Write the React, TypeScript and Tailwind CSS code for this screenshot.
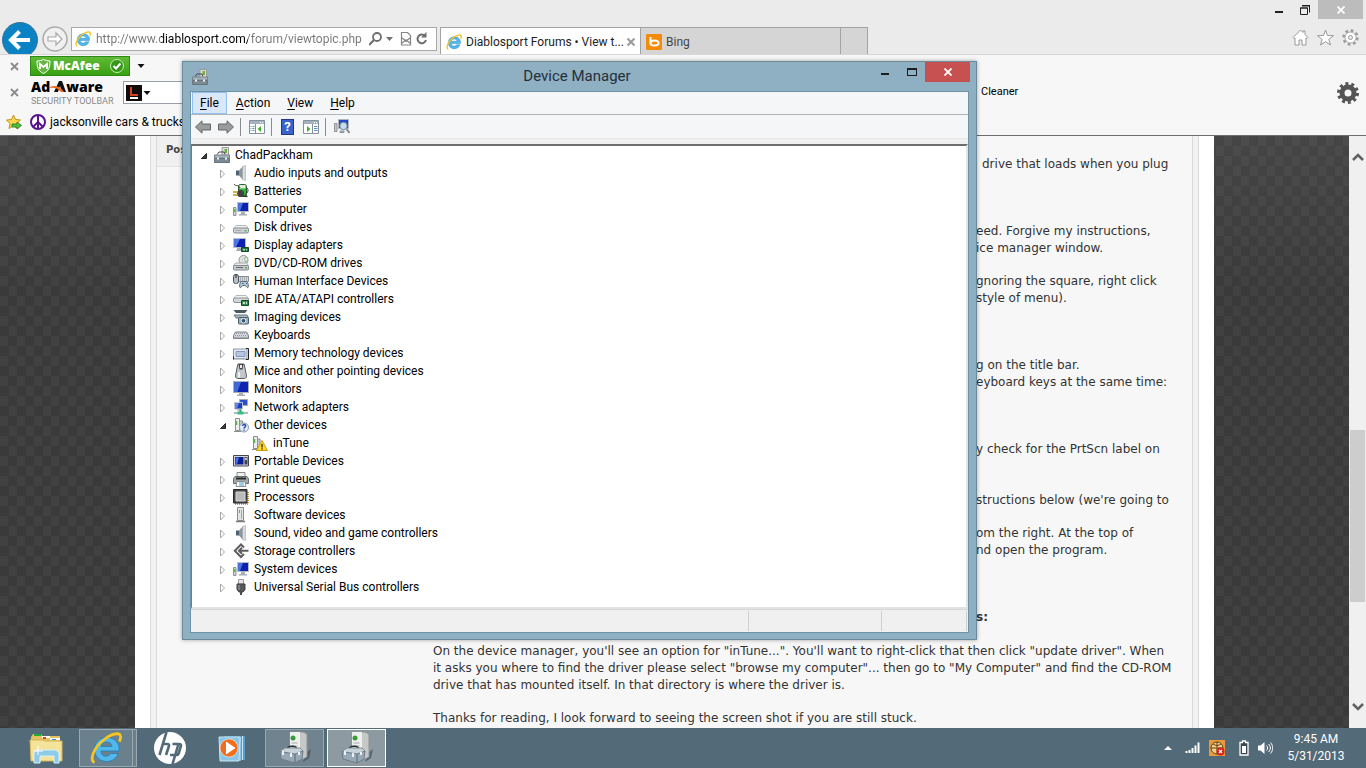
import { useState } from "react";
import type { ReactNode } from "react";

type IconProps = { name: string };

// 16px device icons
const icons: Record<string, ReactNode> = {
  root: (
    <>
      <path d="M8 0.5h6.5v9H8z" fill="#dcdcdc" stroke="#9a9a9a" />
      <path d="M10.5 2h2.5v4h-2.5z" fill="#6fae3c" />
      <path d="M3 7.5 5 5h5l1 2.5" fill="none" stroke="#444" />
      <path d="M0.5 8h15v3h-15z" fill="#a9b5bd" stroke="#76838c" />
      <path d="M0.5 11.5h15v4h-15z" fill="#7d8b95" stroke="#66737c" />
      <path d="M3 10.5h2v2H3zM11 10.5h2v2h-2z" fill="#eef3f6" />
    </>
  ),
  audio: (
    <>
      <path d="M3 5.5h3v5H3z" fill="#4c6273" />
      <path d="M6 5.500 10 1v14l-4-4.500z" fill="#8d979d" />
      <path d="M9.500 1.500 12.500 0.500v15l-3-1z" fill="#d9dcde" stroke="#9aa2a7" strokeWidth="0.500" />
    </>
  ),
  battery: (
    <>
      <rect x="5.500" y="1.500" width="8" height="12" rx="2" fill="#2fae34" stroke="#2c5c2c" />
      <path d="M6.500 2h6v3.500h-6z" fill="#d9efd9" />
      <path d="M1 1c2 3 4 0 6 4M13 4.500c3.500 1 2 6-1 7" fill="none" stroke="#444" />
      <circle cx="7.500" cy="10.500" r="3.500" fill="#3f4240" />
      <path d="M0 9h5M0 12h5" stroke="#c8960c" strokeWidth="1.500" />
      <path d="m10 13 4.500 0.500" stroke="#333" strokeWidth="1.500" />
    </>
  ),
  computer: (
    <>
      <path d="M4.500 1.500h11v9h-11z" fill="#0d22b0" stroke="#b8bec6" />
      <path d="M5 2h5l-3 8H5z" fill="#4a73e0" />
      <path d="M8 11h4v2h2v1.500H6V13h2z" fill="#a7adb3" />
      <path d="M0.500 6.500h2.500v8H0.500z" fill="#d5d9dc" stroke="#8b9298" />
      <path d="M1 8h1.500v3H1z" fill="#57b947" />
    </>
  ),
  disk: (
    <>
      <path d="M3 6.500h10l2.500 3h-15z" fill="#f1f2f3" stroke="#b4b8bc" />
      <rect x="0.500" y="9" width="15" height="5" rx="1.500" fill="#cfd2d5" stroke="#84898e" />
      <path d="M2.500 11.500h6" stroke="#aaa" />
      <path d="M11.500 11h2v1.500h-2z" fill="#4cb944" />
    </>
  ),
  display: (
    <>
      <path d="M0.500 1.500h12v9h-12z" fill="#0d22b0" stroke="#b8bec6" />
      <path d="M1 2h6L3 10H1z" fill="#4d76e4" />
      <path d="M4 11h5v2h1v1H3v-1h1z" fill="#a7adb3" />
      <path d="M8.500 10.500h7v4h-7z" fill="#257544" stroke="#124a28" />
      <path d="M10 12h2v1.500h-2zM13 12h1v1.500h-1z" fill="#b5d8be" />
    </>
  ),
  dvd: (
    <>
      <circle cx="10.500" cy="5" r="4.500" fill="#dfe6df" stroke="#8e958e" />
      <path d="M10.500 5 13 1.500M10.500 5 14 7" stroke="#78b886" />
      <circle cx="10.500" cy="5" r="1.200" fill="#fff" stroke="#999" strokeWidth="0.500" />
      <path d="M2.500 8h11l2 2.500h-15z" fill="#e9ebed" stroke="#a4a9ae" />
      <rect x="0.500" y="10.500" width="15" height="4.500" rx="1" fill="#c6cace" stroke="#84898e" />
      <path d="M3 12.500h7" stroke="#666" />
      <path d="M12 12h2v1.500h-2z" fill="#4cb944" />
    </>
  ),
  hid: (
    <>
      <path d="M5.500 3.500h10v5h-10z" fill="#d7dce0" stroke="#868d93" />
      <path d="M7 5h8M7 7h8" stroke="#737d86" strokeDasharray="1 1" />
      <rect x="0.500" y="1.500" width="5" height="9" rx="2" fill="#b9bfc4" stroke="#4b5258" />
      <path d="M3 1v4" stroke="#222" />
      <path d="M7 14.500c-1-1 0-6 1.500-6h4.500c2 0 3 5 2 6-1 .7-2-2-3-2h-2c-1 0-2 2.700-3 2z" fill="#b6c4cf" stroke="#596874" />
      <path d="M9 10.500h1.500M13 10.500h1" stroke="#2b6fb0" />
    </>
  ),
  ide: (
    <>
      <path d="M3 4.500h10l2.500 3h-15z" fill="#f1f2f3" stroke="#b4b8bc" />
      <rect x="0.500" y="7" width="15" height="4.500" rx="1.500" fill="#d4d7da" stroke="#8d9196" />
      <path d="M8.500 9.500h7v5h-7z" fill="#2f8a4b" stroke="#124a28" />
      <path d="M10 11h2v2h-2zM13 11h1v2h-1z" fill="#c6e2cc" />
    </>
  ),
  imaging: (
    <>
      <path d="M0.500 1h14l-2.500 3h-9z" fill="#4a5a62" />
      <path d="M1 6h13l1.500 3H3z" fill="#a7bac2" stroke="#66767e" />
      <rect x="5.500" y="8.500" width="10" height="6.500" rx="1" fill="#9ab0ba" stroke="#4b5d66" />
      <circle cx="10.500" cy="11.700" r="2.300" fill="#2d5377" stroke="#e6edf0" />
    </>
  ),
  keyboard: (
    <>
      <path d="M2.500 5h11l2 3.500v3h-15v-3z" fill="#d6d9dd" stroke="#777d85" />
      <path d="M3 6.500h10.500M2 8.500h12.500" stroke="#8e949b" strokeDasharray="1 1" />
      <path d="M1 10.500h14" stroke="#a9aeb4" strokeWidth="1.500" />
    </>
  ),
  memory: (
    <>
      <path d="M0.500 4h13.500v10H0.500z" fill="#e3ecf6" stroke="#8a94a0" />
      <path d="M3 6.500h9v5H3z" fill="#b6c5e0" stroke="#8497bb" />
      <path d="M13 3.500h2.500v11H13M0.500 14.500v-3" fill="none" stroke="#222" />
      <path d="M1.500 13.500h11" stroke="#8a929c" strokeDasharray="1 1" />
    </>
  ),
  mouse: (
    <>
      <path d="M5 1h6l1 4 1.500 8c0 2-1.500 2.500-2.500 2.500H5C4 15.500 2.500 15 2.500 13L4 5z" fill="#c4c8cb" stroke="#555b60" />
      <path d="M5.500 1h5l-1 5.500h-3z" fill="#41474c" />
      <path d="M7 2h2v3H7z" fill="#eee" />
      <path d="M6 9v5.500" stroke="#fff" strokeWidth="1.500" />
    </>
  ),
  monitor: (
    <>
      <path d="M0.500 0.500h15v11h-15z" fill="#0d22b0" stroke="#a9afb6" />
      <path d="M1 1h7L4.500 11H1z" fill="#4068da" />
      <path d="M6 12h4v1.500h2V15H4v-1.500h2z" fill="#a7adb3" />
    </>
  ),
  network: (
    <>
      <path d="M6.500 0.500h8v6h-8z" fill="#2c50cc" stroke="#a4abb2" />
      <path d="M1.500 3.500h8v6.500h-8z" fill="#1c3ec2" stroke="#c0c6cc" />
      <path d="M2 4h4l-2 5.500H2z" fill="#5c86ea" />
      <path d="M4 10.500h4v1H4z" fill="#999" />
      <path d="M1 14h14" stroke="#b4babd" strokeWidth="2" />
      <path d="M7.500 10.500v4" stroke="#29a86e" strokeWidth="2" />
      <path d="M4.500 12.500h6v3h-6z" fill="#32c183" />
    </>
  ),
  other: (
    <>
      <path d="M2.500 1.500h4v12h-4z" fill="#eceeed" stroke="#8b908e" />
      <path d="M3.500 4v4" stroke="#5bb54c" strokeWidth="1.500" />
      <path d="M6.500 4h3v9h-3zM1 14.500h7" fill="#c9cdcb" stroke="#8b908e" />
      <circle cx="11" cy="10.500" r="4.500" fill="#e4edf8" stroke="#8298b4" />
      <path d="M9.500 9c0-2 3.200-2 3.200 0 0 1.300-1.700 1-1.700 2.500M11 12.500v1.200" fill="none" stroke="#2444a4" strokeWidth="1.300" />
    </>
  ),
  warning: (
    <>
      <path d="M1.500 1.500h4v12h-4z" fill="#eceeed" stroke="#8b908e" />
      <path d="M2.500 4v4" stroke="#5bb54c" strokeWidth="1.500" />
      <path d="M5.500 4h2.500v9H5.500zM0 14.500h6" fill="#c9cdcb" stroke="#8b908e" />
      <path d="m10 5.500 5.500 10h-11z" fill="#ffd929" stroke="#c89b11" strokeLinejoin="round" />
      <path d="M10 9v3.500M10 13.300v1.200" stroke="#222" strokeWidth="1.300" />
    </>
  ),
  portable: (
    <>
      <path d="M0.500 2.500h15v10.500h-15z" fill="#d2d4d8" stroke="#45484f" />
      <path d="M2 4h8.500v7.500H2z" fill="#0b1d96" />
      <path d="M2.500 4.500H6L4 11H2.500z" fill="#4a75e6" />
      <path d="M11.500 4h3v7.500h-3z" fill="#3d4048" />
      <circle cx="13" cy="6" r="1.200" fill="#c3c6cc" />
    </>
  ),
  printer: (
    <>
      <path d="M4 1.500h8v5H4z" fill="#f0f0f0" stroke="#888" />
      <path d="M2 5.500h12l1.500 2v5H0.500v-5z" fill="#a0a5a9" stroke="#6a6f73" />
      <path d="M3 7.500h10" stroke="#292c2e" strokeWidth="2" />
      <path d="M4 10.500h8l1 5H3z" fill="#fff" stroke="#8b9094" />
      <path d="M6 12h5M6 14h5" stroke="#3c9fc8" />
    </>
  ),
  processor: (
    <>
      <path d="M2 15h13M15 3v12" stroke="#cc9b46" strokeWidth="2" strokeDasharray="1 1" />
      <path d="M0.500 0.500h13.500v13.500H0.500z" fill="#474747" stroke="#2a2a2a" />
      <path d="M3 3h9v9H3z" fill="#b9bcbc" stroke="#d8d8d8" />
      <path d="m12 10 1.500 1.500-1.500 1.500z" fill="#e0a83b" />
    </>
  ),
  software: (
    <>
      <path d="M4.500 0.500h6v13h-6z" fill="#e1e4e2" stroke="#8b908e" />
      <path d="M8.500 3v9" stroke="#a5aaa7" />
      <path d="M6.500 3v3" stroke="#5bb54c" />
      <path d="M3 14.500h9" stroke="#777b79" strokeWidth="1.500" />
    </>
  ),
  storage: (
    <path
      d="M11 4.500 8 1.500 1.800 7.700 8 14l3-3M15.500 7.700H6M9 4.700l-3 3 3 3"
      fill="none"
      stroke="#5d5d5d"
      strokeWidth="2"
    />
  ),
  usb: (
    <>
      <path d="M5.500 0.500h5V5h-5z" fill="#e4e5e6" stroke="#9a9da0" />
      <path d="M4 5h8v5.500L10 13H6l-2-2.500z" fill="#56595c" stroke="#3e4144" />
      <path d="M6 6v5" stroke="#a0a4a8" />
      <path d="M8 13v3" stroke="#4a4d50" strokeWidth="2" />
    </>
  ),
};

function DeviceIcon({ name }: IconProps) {
  return (
    <svg viewBox="0 0 16 16" className="size-4 shrink-0" aria-hidden="true">
      {icons[name]}
    </svg>
  );
}

function IeLogo({ className }: { className: string }) {
  return (
    <svg viewBox="0 0 32 32" className={className} aria-hidden="true">
      <path
        d="M28 21.500h-7.500c-1 2-2.700 2.700-4.500 2.700-3 0-5-1.700-5-5.200H29C30 11 24.500 5.500 17 5.500S4.500 11 4.500 17.500 9.500 29.500 16.500 29.500c5.500 0 10-3 11.500-8zM11 14.500c.5-3 2.500-4.500 5.500-4.500s5 1.500 5.500 4.500z"
        fill="#52b7ea"
        stroke="#1d7fc0"
        strokeWidth="0.800"
        fillRule="evenodd"
      />
      <path
        d="M4.500 30.500C-1 28 4 16 12.500 9 20.500 2 29.500-0.500 30.500 4c.4 1.500-.2 3.500-1.200 5.500"
        fill="none"
        stroke="#f6c51f"
        strokeWidth="2.800"
      />
    </svg>
  );
}

function DeviceManagerLogo() {
  return (
    <svg viewBox="0 0 32 34" className="h-[34px] w-8" aria-hidden="true">
      <path d="m27 22 5-4-2 9-6 4z" fill="#36454e" opacity="0.600" />
      <path d="M11 1h13l4 2v23l-4 2H11z" fill="#c6c8c8" stroke="#8d9394" />
      <path d="M11 1h10v26H11z" fill="#eef0ef" />
      <circle cx="14" cy="7" r="2.500" fill="#3a9a37" />
      <path d="M12.500 12h6M12.500 15h6" stroke="#a5a9a9" />
      <path d="M8 19c0-5 10-5 10 0" fill="none" stroke="#252a2d" strokeWidth="1.500" />
      <path d="m1 20 5-3h15l3 3-5 4H5z" fill="#c7d2d9" stroke="#7d8c96" />
      <path d="M1 20.500 16 23v9L2 28zM16 23l8-3-1 8-7 4z" fill="#98a9b5" stroke="#6c7c88" />
      <path d="M4 20v4M12 22v4M20 21v3" stroke="#eaf0f3" strokeWidth="2" />
    </svg>
  );
}

type Device = { label: string; icon: string; children?: Device[] };

const devices: Device[] = [
  { label: "Audio inputs and outputs", icon: "audio" },
  { label: "Batteries", icon: "battery" },
  { label: "Computer", icon: "computer" },
  { label: "Disk drives", icon: "disk" },
  { label: "Display adapters", icon: "display" },
  { label: "DVD/CD-ROM drives", icon: "dvd" },
  { label: "Human Interface Devices", icon: "hid" },
  { label: "IDE ATA/ATAPI controllers", icon: "ide" },
  { label: "Imaging devices", icon: "imaging" },
  { label: "Keyboards", icon: "keyboard" },
  { label: "Memory technology devices", icon: "memory" },
  { label: "Mice and other pointing devices", icon: "mouse" },
  { label: "Monitors", icon: "monitor" },
  { label: "Network adapters", icon: "network" },
  { label: "Other devices", icon: "other", children: [{ label: "inTune", icon: "warning" }] },
  { label: "Portable Devices", icon: "portable" },
  { label: "Print queues", icon: "printer" },
  { label: "Processors", icon: "processor" },
  { label: "Software devices", icon: "software" },
  { label: "Sound, video and game controllers", icon: "audio" },
  { label: "Storage controllers", icon: "storage" },
  { label: "System devices", icon: "computer" },
  { label: "Universal Serial Bus controllers", icon: "usb" },
];

function Expander({ open, label, onClick }: { open: boolean; label: string; onClick?: () => void }) {
  return (
    <button type="button" aria-label={label} aria-expanded={open} onClick={onClick} className="mr-1 h-4 w-3 shrink-0">
      <svg viewBox="0 0 12 16" className="h-4 w-3" aria-hidden="true">
        {open ? <path d="M8.500 6.500v5h-5z" fill="#404040" stroke="#262626" /> : <path d="M3.500 5v8l4-4z" fill="#fff" stroke="#a6a6a6" />}
      </svg>
    </button>
  );
}

function TreeItem({ device }: { device: Device }) {
  const [open, setOpen] = useState(true);
  return (
    <li>
      <div className="flex h-[18px] items-center">
        {device.children || device.icon !== "warning" ? (
          <Expander open={!!device.children && open} label={"Toggle " + device.label} onClick={() => setOpen(!open)} />
        ) : (
          <span className="w-4" />
        )}
        <DeviceIcon name={device.icon} />
        <span className="ml-[5px] whitespace-nowrap">{device.label}</span>
      </div>
      {device.children && open && (
        <ul className="pl-[19px]">
          {device.children.map((child) => (
            <TreeItem key={child.label} device={child} />
          ))}
        </ul>
      )}
    </li>
  );
}

function PanelIcon({ flip }: { flip?: boolean }) {
  return (
    <svg viewBox="0 0 16 14" className="h-[14px] w-4" aria-hidden="true">
      <path d="M0.500 0.500h15v13h-15z" fill="#fff" stroke="#84909b" />
      <path d="M1 1h14v3H1z" fill="#a3b2be" />
      <path d="M11 2.500h1M13 2.500h1" stroke="#fff" />
      {flip ? (
        <>
          <path d="M9.500 4v9" stroke="#84909b" />
          <path d="M11 6.500h3.500M11 8.500h3.500M11 10.500h3.500" stroke="#5b8fc0" />
          <path d="M4 6v6l3.500-3z" fill="#3fae2a" />
        </>
      ) : (
        <>
          <path d="M6.500 4v9" stroke="#84909b" />
          <path d="M1.500 6.500h4M1.500 8.500h4M1.500 10.500h4" stroke="#5b8fc0" strokeDasharray="1 1 2 1" />
          <path d="M12 6v6L8.500 9z" fill="#3fae2a" />
        </>
      )}
    </svg>
  );
}

function ArrowIcon({ flip }: { flip?: boolean }) {
  return (
    <svg viewBox="0 0 16 14" className="h-[14px] w-4" aria-hidden="true">
      <path
        d={flip ? "M15.500 7 9 0.800V4H0.500v6H9v3.200z" : "M0.500 7 7 0.800V4h8.500v6H7v3.200z"}
        fill="#9b9b9b"
        stroke="#666"
      />
    </svg>
  );
}

function DeviceManager() {
  return (
    <section
      aria-label="Device Manager"
      className="absolute top-[61px] left-[182px] w-[795px] border border-[#6b8b9b] bg-[#8fafc3] px-[7px] pb-[6px] text-[12px] text-black shadow-[0_0_4px_rgba(0,0,0,0.35)]"
    >
      <header className="flex h-[29px] items-start">
        <div className="flex h-[29px] w-[93px] items-center pl-[2px]">
          <DeviceIcon name="root" />
        </div>
        <h1 className="flex-1 text-center text-[15px] leading-[29px] text-[#24303a]">Device Manager</h1>
        <div className="-mr-px flex">
          <button type="button" aria-label="Minimize" className="flex h-[20px] w-[27px] items-center justify-center">
            <span className="mt-[4px] h-[2px] w-2 bg-[#1e1e1e]" />
          </button>
          <button type="button" aria-label="Maximize" className="flex h-[20px] w-[27px] items-center justify-center">
            <span className="h-2 w-[10px] border border-t-2 border-[#1e1e1e]" />
          </button>
          <button type="button" aria-label="Close" className="flex h-[20px] w-[45px] items-center justify-center bg-[#c75050]">
            <svg viewBox="0 0 8 8" className="size-2" aria-hidden="true">
              <path d="m0.500 0.500 7 7M7.500 0.500l-7 7" stroke="#fff" strokeWidth="1.800" />
            </svg>
          </button>
        </div>
      </header>

      <div className="border border-[#6f93a6] bg-[#f0f0f0]">
        <nav className="flex h-[23px] items-center gap-[1px] border-b border-[#b0b3b8] bg-[#f5f6f7] pl-[1px]">
          {["File", "Action", "View", "Help"].map((item, i) => (
            <button
              key={item}
              type="button"
              className={
                i === 0
                  ? "h-[22px] border border-[#90c0ee] bg-[#d9e8f8] px-[7px] leading-5"
                  : "h-[22px] border border-transparent px-[7px] leading-5"
              }
            >
              <span className="underline underline-offset-2">{item[0]}</span>
              {item.slice(1)}
            </button>
          ))}
        </nav>

        <div className="flex h-6 items-center border-b border-[#e4e6e8] bg-[#f5f6f7] pt-px pl-1">
          <button type="button" aria-label="Back"><ArrowIcon /></button>
          <button type="button" aria-label="Forward" className="ml-[7px]"><ArrowIcon flip /></button>
          <span className="ml-[6px] h-[18px] w-px bg-[#8a8c8e]" />
          <button type="button" aria-label="Show console tree" className="ml-2"><PanelIcon /></button>
          <span className="ml-[6px] h-[18px] w-px bg-[#8a8c8e]" />
          <button type="button" aria-label="Help topics" className="ml-[9px] h-4 w-[13px] border border-[#1d3a8c] bg-[#3a62cc] text-[13px] leading-[14px] font-bold text-white">
            ?
          </button>
          <button type="button" aria-label="Show action pane" className="ml-[9px]"><PanelIcon flip /></button>
          <span className="ml-[6px] h-[18px] w-px bg-[#8a8c8e]" />
          <button type="button" aria-label="Scan for hardware changes" className="ml-2">
            <svg viewBox="0 0 16 16" className="size-4" aria-hidden="true">
              <path d="M4.500 0.500h10v9h-10z" fill="#2449c5" stroke="#b1b7be" />
              <path d="M0.500 4.500H3v8H0.500zM6 12h4v1.500H6z" fill="#c3c8cc" stroke="#8b9298" />
              <circle cx="9.500" cy="7" r="3.700" fill="#c5ddf2" stroke="#71889a" />
              <path d="m12.500 10 3 4" stroke="#888" strokeWidth="2" />
            </svg>
          </button>
        </div>

        <div className="mt-[5px] border-2 border-l border-t-[#6e6e6e] border-r-[#e3e3e3] border-b-[#e3e3e3] border-l-[#7a7a7a] bg-white">
          <div className="h-[461px] pl-[6px]">
            <div className="flex h-[18px] items-center">
              <Expander open label="Toggle ChadPackham" />
              <DeviceIcon name="root" />
              <span className="ml-[5px]">ChadPackham</span>
            </div>
            <ul className="pl-[19px]">
              {devices.map((device) => (
                <TreeItem key={device.label} device={device} />
              ))}
            </ul>
          </div>
        </div>

        <footer className="flex h-[23px] border-t border-[#d5d5d5] py-px">
          <span className="flex-1 border-r border-[#d0d0d0]" />
          <span className="w-[133px] border-r border-[#d0d0d0]" />
          <span className="mr-px w-[85px] border-r border-[#d0d0d0]" />
        </footer>
      </div>
    </section>
  );
}

// the head of every line sits in a fixed right-aligned cell so the tails share one edge
const postLines: { head: string; tail: string; space: string; bold?: boolean }[] = [
  { head: "", tail: "drive that loads when you plug", space: "mt-5 pl-[6px]" },
  { head: "n", tail: "eed. Forgive my instructions,", space: "mt-[50px]" },
  { head: "dev", tail: "ice manager window.", space: "" },
  { head: "i", tail: "gnoring the square, right click", space: "mt-4" },
  { head: "", tail: "style of menu).", space: "" },
  { head: "goin", tail: "g on the title bar.", space: "mt-[50px]" },
  { head: "k", tail: "eyboard keys at the same time:", space: "" },
  { head: "ma", tail: "y check for the PrtScn label on", space: "mt-[50px]" },
  { head: "in", tail: "structions below (we're going to", space: "mt-[34px]" },
  { head: "fr", tail: "om the right. At the top of", space: "mt-4" },
  { head: "a", tail: "nd open the program.", space: "" },
  { head: "", tail: "s:", space: "mt-[50px]", bold: true },
];

function ForumPage() {
  return (
    <main className="flex min-h-0 flex-1 overflow-hidden bg-[linear-gradient(180deg,rgba(255,255,255,0.06),rgba(255,255,255,0)_160px),repeating-conic-gradient(#3a3a3a_0_25%,#414141_0_50%)] bg-[length:100%_100%,17px_20px]">
      <div className="mx-[135px] flex flex-1 bg-white px-[15px]">
        <div className="flex flex-1 border-x border-[#dadada] bg-[#f2f2f2] px-[5px] font-['DejaVu_Sans',Verdana,sans-serif] text-[12px] leading-[17px] text-[#333]">
          <div className="flex flex-1 border-x border-[#dadada] bg-[#f7f7f7]">
            <aside className="w-[276px] shrink-0">
              <h2 className="h-[31px] border-b border-[#e2e2e2] bg-[#f0f0f0] pl-[9px] text-[10px] leading-7 font-bold text-[#444]">Post details</h2>
            </aside>
            <article className="flex-1">
              {postLines.map((line) => (
                <div key={line.tail} className={line.bold ? "flex font-bold whitespace-nowrap " + line.space : "flex whitespace-nowrap " + line.space}>
                  <span className="w-[543px] shrink-0 text-right">{line.head}</span>
                  <span>{line.tail}</span>
                </div>
              ))}
              <p className="mt-[17px]">
                On the device manager, you'll see an option for "inTune...". You'll want to right-click that then click "update driver". When
                <br />
                it asks you where to find the driver please select "browse my computer"... then go to "My Computer" and find the CD-ROM
                <br />
                drive that has mounted itself. In that directory is where the driver is.
              </p>
              <p className="mt-4">Thanks for reading, I look forward to seeing the screen shot if you are still stuck.</p>
            </article>
          </div>
        </div>
      </div>
    </main>
  );
}

function ScrollBar() {
  return (
    <div className="flex w-[17px] flex-col items-center bg-[#f0f0f0] py-[17px]">
      <svg viewBox="0 0 12 8" className="h-2 w-3" aria-hidden="true">
        <path d="m1 7 5-5 5 5" fill="none" stroke="#606060" strokeWidth="2.500" />
      </svg>
      <div className="mt-[269px] h-[172px] w-[15px] bg-[#cdcdcd]" />
      <svg viewBox="0 0 12 8" className="mt-auto h-2 w-3" aria-hidden="true">
        <path d="m1 1 5 5 5-5" fill="none" stroke="#606060" strokeWidth="2.500" />
      </svg>
    </div>
  );
}

function BrowserChrome() {
  return (
    <header className="text-[12px]">
      <div className="flex h-[55px] items-end overflow-hidden border-b border-[#d6d6d6] bg-[#ebebeb]">
        <button type="button" aria-label="Back" className="-mb-1 ml-[2px] shrink-0">
          <svg viewBox="0 0 36 36" className="size-9" aria-hidden="true">
            <circle cx="18" cy="18" r="17.500" fill="#0a82c4" stroke="#3d7391" />
            <path d="M28 18H10M17.500 9.500 9 18l8.500 8.500" fill="none" stroke="#fff" strokeWidth="4" />
          </svg>
        </button>
        <button type="button" aria-label="Forward" className="mb-[2px] ml-1 shrink-0">
          <svg viewBox="0 0 26 26" className="size-[26px]" aria-hidden="true">
            <circle cx="13" cy="13" r="12" fill="#f0f0f0" stroke="#aaa" strokeWidth="1.500" />
            <path d="M6 11h8V7l6 6-6 6v-4H6z" fill="#fff" stroke="#a8a8a8" strokeWidth="1.200" />
          </svg>
        </button>
        <div className="mb-[3px] ml-[3px] flex h-6 w-[366px] shrink-0 items-center border border-[#a8a8a8] bg-white pl-[3px]">
          <IeLogo className="size-4 shrink-0" />
          <input
            aria-label="Address"
            defaultValue="http://www.diablosport.com/forum/viewtopic.php"
            className="ml-[5px] w-[273px] bg-[linear-gradient(90deg,#777_65px,#000_65px,#000_152px,#777_152px)] bg-clip-text text-[12px] text-transparent outline-none"
          />
          <svg viewBox="0 0 64 16" className="h-4 w-16" aria-hidden="true">
            <circle cx="8" cy="6" r="4" fill="none" stroke="#6d6d6d" strokeWidth="1.800" />
            <path d="m5 9-5 5" stroke="#6d6d6d" strokeWidth="2.200" />
            <path d="M17 6h7l-3.500 4z" fill="#707070" />
            <path d="M32.500 1.500h6l3 3V14h-9zM33 7l4 3 4-3M33 12l4-3 4 3" fill="none" stroke="#858585" strokeWidth="1.200" />
            <path d="M56 5a4.300 4.300 0 1 0 1 4" fill="none" stroke="#6d6d6d" strokeWidth="2" />
            <path d="M57.500 1v5.500H52z" fill="#6d6d6d" />
          </svg>
        </div>
        <div className="ml-[3px] flex h-[27px] border-t border-[#a3a3a3]">
          <button type="button" className="flex w-[201px] items-center border-x border-[#a3a3a3] bg-white pt-px pl-[5px] text-left text-[#222]">
            <IeLogo className="size-4 shrink-0" />
            <span className="ml-1 w-[161px] whitespace-nowrap">Diablosport Forums • View t...</span>
            <svg viewBox="0 0 8 8" className="size-2 shrink-0" aria-hidden="true">
              <path d="m0.500 0.500 7 7M7.500 0.500l-7 7" stroke="#999" strokeWidth="2" />
            </svg>
          </button>
          <button type="button" className="flex w-[200px] items-center border-r border-[#a3a3a3] bg-[#d5d5d5] pt-px pl-[5px] text-[#444]">
            <svg viewBox="0 0 16 16" className="size-4" aria-hidden="true">
              <rect width="16" height="16" rx="1" fill="#f58b0b" />
              <path d="M4.500 3v6.500" stroke="#fff" strokeWidth="2" />
              <ellipse cx="8.500" cy="9" rx="4" ry="2.600" fill="none" stroke="#fff" strokeWidth="2" />
            </svg>
            <span className="ml-1">Bing</span>
          </button>
          <button type="button" aria-label="New tab" className="w-[27px] border-r border-[#a3a3a3] bg-[#d5d5d5]" />
        </div>
        <div className="ml-auto flex flex-col items-end">
          <div className="mb-[10px] flex pr-[3px]">
            <button type="button" aria-label="Minimize browser" className="flex h-[19px] w-[26px] items-center justify-center">
              <span className="mt-[5px] h-[2px] w-2 bg-[#222]" />
            </button>
            <button type="button" aria-label="Restore browser" className="flex h-[19px] w-[26px] items-center justify-center">
              <svg viewBox="0 0 10 10" className="size-[10px]" aria-hidden="true">
                <path d="M0.500 3h7v6.500h-7zM2 1h7.500v6.500" fill="none" stroke="#222" />
                <path d="M0 3h8M2 0.500h8" stroke="#222" />
              </svg>
            </button>
            <button type="button" aria-label="Close browser" className="flex h-[19px] w-[45px] items-center justify-center bg-[#bcbcbc]">
              <svg viewBox="0 0 8 8" className="size-2" aria-hidden="true">
                <path d="m0.500 0.500 7 7M7.500 0.500l-7 7" stroke="#fff" strokeWidth="1.800" />
              </svg>
            </button>
          </div>
          <div className="mb-2 flex gap-2 pr-[7px]">
            <button type="button" aria-label="Home">
              <svg viewBox="0 0 17 17" className="size-[17px]" aria-hidden="true">
                <path d="M8.500 1 1 8.500l1 1 1-.500v7h4v-5h3v5h4V9l1 .500 1-1-3-3V2h-2v1.500z" fill="#fff" stroke="#999" />
              </svg>
            </button>
            <button type="button" aria-label="Favorites">
              <svg viewBox="0 0 17 17" className="size-[17px]" aria-hidden="true">
                <path d="m8.500 1 2 5.500 6 .2-4.700 3.700 1.700 5.600-5-3.300L3.500 16l1.700-5.600L0.500 6.700l6-.2z" fill="#fff" stroke="#999" />
              </svg>
            </button>
            <button type="button" aria-label="Tools">
              <svg viewBox="0 0 17 17" className="size-[17px]" aria-hidden="true">
                <circle cx="8.500" cy="8.500" r="6.700" fill="none" stroke="#999" strokeWidth="3" strokeDasharray="2.630 2.630" />
                <circle cx="8.500" cy="8.500" r="5.500" fill="#fff" stroke="#aaa" />
                <circle cx="8.500" cy="8.500" r="2" fill="#ebebeb" stroke="#999" />
              </svg>
            </button>
          </div>
        </div>
      </div>

      <div className="flex border-b border-[#6d6d6d] bg-[#f7f7f7]">
        <div className="flex-1">
          <div className="flex h-[22px] items-center pl-[10px]">
            <CloseMark />
            <div className="ml-[11px] flex h-5 w-[100px] items-center border border-[#2e8a17] bg-linear-to-b from-[#5fbb35] to-[#38a110] pl-[5px]">
              <svg viewBox="0 0 15 15" className="size-[15px]" aria-hidden="true">
                <path d="M1 2c3 0 5-1 6.500-1.500C9 1 11 2 14 2c0 6-1 10-6.500 12.500C2 12 1 8 1 2z" fill="#67b543" stroke="#fff" />
                <path d="M4 10V5l3.500 3L11 5v5" fill="none" stroke="#fff" strokeWidth="1.800" />
              </svg>
              <span className="ml-[2px] w-12 font-['Open_Sans',sans-serif] text-[12px] font-extrabold text-white">McAfee</span>
              <svg viewBox="0 0 14 14" className="ml-[9px] size-[14px]" aria-hidden="true">
                <circle cx="7" cy="7" r="6.500" fill="#35971a" stroke="#c7edb5" />
                <path d="m3.500 7 2.500 2.500 4.500-5" fill="none" stroke="#fff" strokeWidth="2" />
              </svg>
            </div>
            <Caret className="ml-[7px]" />
          </div>
          <div className="flex h-[31px] items-center pl-[10px]">
            <CloseMark />
            <div className="ml-[12px] w-[82px]">
              <p className="flex items-center font-['Open_Sans',sans-serif] text-[14px] leading-4 font-extrabold">
                Ad
                <svg viewBox="0 0 16 11" className="h-[11px] w-4" aria-hidden="true">
                  <path d="M4 11 9 0h3l4 11h-4L10 5l-2 6z" fill="#111" />
                  <path d="M0 6c5-2 10-1 14 5h-3C8 7 4 6 0 7z" fill="#f06a1d" />
                </svg>
                ware
              </p>
              <p className="text-[9px] leading-3 whitespace-nowrap text-[#8a8a8a]">SECURITY TOOLBAR</p>
            </div>
            <div className="ml-[10px] flex h-[23px] w-[160px] items-center border border-[#9aa0a8] bg-white pl-[2px]">
              <svg viewBox="0 0 16 16" className="size-4" aria-hidden="true">
                <rect width="16" height="16" fill="#100c0b" />
                <path d="M5 2v8h7" fill="none" stroke="#d8411c" strokeWidth="2" />
                <path d="M4 13h8" stroke="#fff" strokeWidth="2" />
              </svg>
              <Caret className="ml-px" />
            </div>
          </div>
          <div className="flex h-[27px] items-center pl-[6px]">
            <svg viewBox="0 0 16 16" className="size-4" aria-hidden="true">
              <path d="m7.500 1 2 4.500 5 .5-3.700 3.500 1 5-4.300-2.500L3 14.500l1-5L.5 6l5-.5z" fill="#fbd64f" stroke="#c89018" />
              <path d="M6 10h5V8l4.500 3.500L11 15v-2H6z" fill="#4cc33c" stroke="#237a1c" strokeWidth="0.800" />
            </svg>
            <svg viewBox="0 0 16 16" className="ml-2 size-4" aria-hidden="true">
              <circle cx="8" cy="8" r="7" fill="#fff" stroke="#57138f" strokeWidth="2" />
              <path d="M8 1v14M8 8l-5 5M8 8l5 5" stroke="#57138f" strokeWidth="2" />
            </svg>
            <a href="#jacksonville" className="ml-1 whitespace-nowrap">jacksonville cars & trucks</a>
          </div>
        </div>
        <div className="flex h-[75px] w-[390px] items-center">
          <a href="#cleaner" className="ml-[5px] flex-1 text-[11px]">Cleaner</a>
          <button type="button" aria-label="Toolbar settings" className="mr-[7px]">
            <svg viewBox="0 0 22 22" className="size-[22px]" aria-hidden="true">
              <circle cx="11" cy="11" r="9" fill="none" stroke="#555" strokeWidth="4" strokeDasharray="2.830 2.830" />
              <circle cx="11" cy="11" r="6" fill="none" stroke="#555" strokeWidth="5" />
            </svg>
          </button>
        </div>
      </div>
    </header>
  );
}

function CloseMark() {
  return (
    <button type="button" aria-label="Close toolbar">
      <svg viewBox="0 0 9 9" className="size-[9px]" aria-hidden="true">
        <path d="m1 1 7 7M8 1 1 8" stroke="#8b8b8b" strokeWidth="1.800" />
      </svg>
    </button>
  );
}

function Caret({ className }: { className: string }) {
  return (
    <svg viewBox="0 0 8 4" className={"h-1 w-2 " + className} aria-hidden="true">
      <path d="M0.500 0h7L4 4z" fill="#111" />
    </svg>
  );
}

function Taskbar() {
  return (
    <footer className="flex h-10 shrink-0 items-center bg-[#536a78] text-white">
      <button type="button" aria-label="File Explorer" className="ml-[29px]">
        <svg viewBox="0 0 34 32" className="h-8 w-[34px]" aria-hidden="true">
          <path d="M2 5 4 2h8l1 2h18v24H2z" fill="#e3c35d" />
          <path d="M5 2h7v2H5z" fill="#1fae2c" />
          <path d="M13 4h8v2h-8z" fill="#fff" />
          <path d="M14 5h3v2h-3z" fill="#d9422c" />
          <path d="M21 6h10v2H21z" fill="#fff" />
          <path d="M23 7h4v1h-4z" fill="#2f8fd8" />
          <path d="M1 8h13l2 1h17v20H2z" fill="#f5e39a" stroke="#d3b65a" />
          <path d="M7 18h20l3 3v10h-5v-7H11v7H5V21z" fill="#8ecbe8" stroke="#d7f1fb" />
          <path d="M5 19h9M9 14v9" stroke="#fff" />
        </svg>
      </button>
      <button type="button" aria-label="Internet Explorer" className="ml-4 flex h-[38px] w-[54px] items-center justify-center border border-[#98a7b0] bg-[#6b808d]">
        <IeLogo className="size-8" />
      </button>
      <span className="h-[38px] w-1 border-y border-r border-[#98a7b0] bg-[#6b808d]" />
      <button type="button" aria-label="HP" className="ml-[17px]">
        <svg viewBox="0 0 32 32" className="size-8" aria-hidden="true">
          <circle cx="16" cy="16" r="16" fill="#fff" />
          <path d="M12.500 0 5.500 23M9 12h4.500c1.500 0 1.800 1 1.300 2.500L12 23M18.500 32l6-20M18.500 12H25c2 0 2.200 1 1.800 2.500l-2 6.500c-.4 1.300-1 2-2.500 2H16" fill="none" stroke="#536a78" strokeWidth="2.600" />
        </svg>
      </button>
      <button type="button" aria-label="Media Player" className="ml-8">
        <svg viewBox="0 0 28 30" className="h-[30px] w-7" aria-hidden="true">
          <path d="M6 3h21v24H6z" fill="#579fca" />
          <path d="M24.500 3v24M22 4v24" stroke="#c8e6f5" />
          <path d="M1 4h21l-1 24H2z" fill="#8fc5e4" stroke="#c8e6f5" />
          <circle cx="11" cy="15" r="9" fill="#ef6f1e" stroke="#fff" strokeWidth="0.500" />
          <path d="M8 8.500v13l9.500-6.500z" fill="#fff" />
        </svg>
      </button>
      <button type="button" aria-label="Device Manager window 1" className="ml-[19px] flex h-[38px] w-[59px] items-center justify-center border border-[#98a7b0] bg-[#71838e]">
        <DeviceManagerLogo />
      </button>
      <button type="button" aria-label="Device Manager window 2" className="ml-[3px] flex h-[38px] w-[59px] items-center justify-center border border-white bg-[#8d9aa2]">
        <DeviceManagerLogo />
      </button>

      <div className="ml-auto flex items-center pr-5">
        <svg viewBox="0 0 8 4" className="h-1 w-2" aria-hidden="true">
          <path d="M0 4h8L4 0z" fill="#fff" />
        </svg>
        <svg viewBox="0 0 16 14" className="ml-[13px] h-[14px] w-4" aria-hidden="true">
          <path d="M1.500 10v2M4.500 9v3M7.500 7v5M10.500 4.500V12M13.500 1.500V12" stroke="#fff" strokeWidth="2" />
        </svg>
        <svg viewBox="0 0 16 16" className="ml-2 size-4" aria-hidden="true">
          <rect width="16" height="16" fill="#e99a3a" />
          <circle cx="8" cy="8" r="6" fill="#f5d08d" stroke="#5f4216" />
          <path d="M2 8h12M8 2v12M4 4c3 2 5 2 8 0" fill="none" stroke="#5f4216" />
          <circle cx="11.500" cy="11.500" r="4" fill="#d5231c" />
          <path d="m10 10 3 3M13 10l-3 3" stroke="#fff" strokeWidth="1.300" />
        </svg>
        <svg viewBox="0 0 10 16" className="ml-[14px] h-4 w-[10px]" aria-hidden="true">
          <path d="M3.500 1h3v1.500H9V15H1V2.500h2.500z" fill="#37474f" stroke="#fff" strokeWidth="1.300" />
          <path d="M3 6h4v7H3z" fill="#fff" />
        </svg>
        <svg viewBox="0 0 16 14" className="ml-2 h-[14px] w-4" aria-hidden="true">
          <path d="M1 4.500h2.500L7.500 1v12L3.500 9.500H1z" fill="#fff" />
          <path d="M9.500 4.500c1.500 1.500 1.500 3.500 0 5M11.500 3c2.500 2.500 2.500 5.500 0 8M13.500 1.500c3 3.500 3 7.500 0 11" fill="none" stroke="#fff" />
        </svg>
        <div className="ml-[13px] w-[60px] text-center text-[12px] leading-[17px] whitespace-nowrap">
          <p>9:45 AM</p>
          <p>5/31/2013</p>
        </div>
      </div>
    </footer>
  );
}

export default function App() {
  return (
    <div className="relative flex h-screen flex-col overflow-hidden bg-[#ebebeb] font-[Roboto,'Open_Sans',sans-serif]">
      <BrowserChrome />
      <div className="flex min-h-0 flex-1">
        <ForumPage />
        <ScrollBar />
      </div>
      <Taskbar />
      <DeviceManager />
    </div>
  );
}
